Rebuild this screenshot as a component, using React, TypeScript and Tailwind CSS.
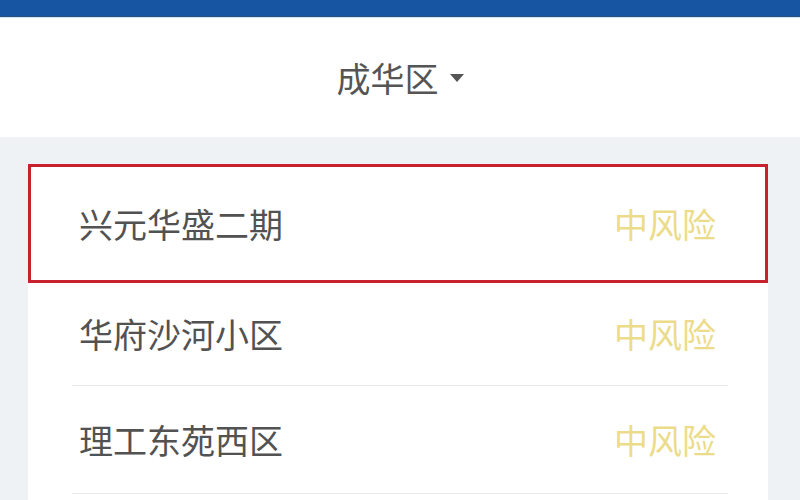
import React from "react";

const font = { fontFamily: '"Noto Sans CJK SC", "Noto Sans", sans-serif' };

function Row({ name, h, divider, first }: { name: string; h: string; divider?: boolean; first?: boolean }) {
  return (
    <>
      <div
        className={
          first
            ? "h-[119px] border-[3px] border-[#c9202e] flex items-center justify-between pl-[48px] pr-[49px]"
            : `${h} flex items-center justify-between pl-[51px] pr-[52px]`
        }
      >
        <span className="text-[34px] leading-none text-[#525252]">{name}</span>
        <span className="text-[34px] leading-none text-[#ecdc8a]">中风险</span>
      </div>
      {divider && <div className="h-px bg-[#e9e9e9] ml-[44px] mr-[40px]" />}
    </>
  );
}

export default function App() {
  return (
    <div className="w-[800px] h-[500px] overflow-hidden bg-[#eff2f4] flex flex-col" style={font}>
      <div className="h-[16px] bg-[#1755a2] shrink-0" />
      <div className="h-px bg-[#28507a] shrink-0" />
      <div className="h-px bg-[#cfe6f4] shrink-0" />
      <div className="h-[119px] bg-white shrink-0 flex items-center justify-center">
        <span className="text-[34px] leading-none text-[#555555]">成华区</span>
        <svg width="14" height="10" viewBox="0 0 14 10" className="ml-[11px]">
          <polygon points="0,1 14,1 7,9" fill="#555555" />
        </svg>
      </div>
      <div className="h-[27px] shrink-0" />
      <div className="ml-[28px] w-[740px] bg-white flex-1 flex flex-col">
        <Row name="兴元华盛二期" h="" first />
        <Row name="华府沙河小区" h="h-[102px]" divider />
        <Row name="理工东苑西区" h="h-[107px]" divider />
      </div>
    </div>
  );
}
